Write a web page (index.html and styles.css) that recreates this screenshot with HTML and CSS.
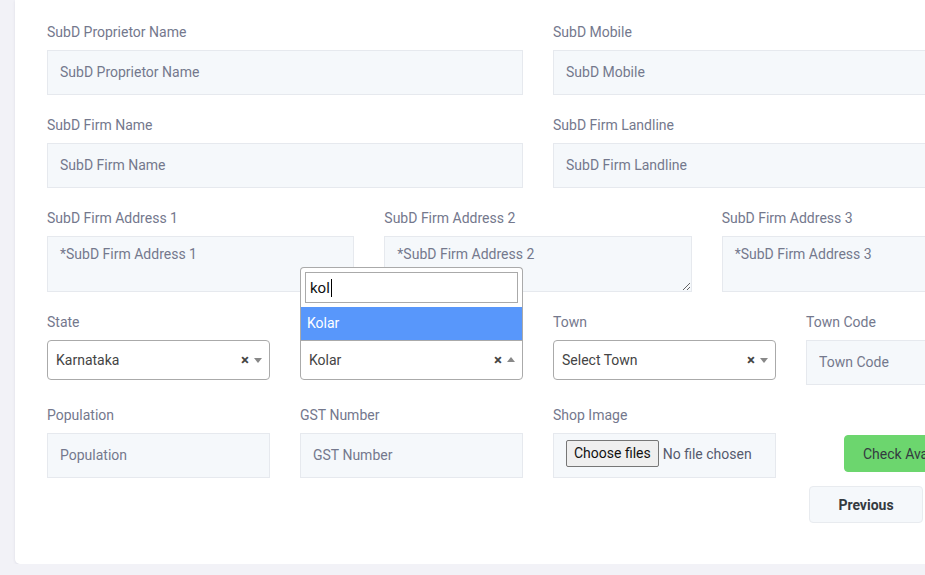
FILE: index.html
```html
<!DOCTYPE html>
<html lang="en">
<head>
<meta charset="utf-8">
<title>SubD Form</title>
<link rel="stylesheet" href="styles.css">
</head>
<body>
<div class="page">
  <form class="card">
    <div class="row row-2">
      <div class="field">
        <label class="lbl">SubD Proprietor Name</label>
        <input class="ctl" type="text" placeholder="SubD Proprietor Name">
      </div>
      <div class="field">
        <label class="lbl">SubD Mobile</label>
        <input class="ctl" type="text" placeholder="SubD Mobile">
      </div>
    </div>
    <div class="row row-2">
      <div class="field">
        <label class="lbl">SubD Firm Name</label>
        <input class="ctl" type="text" placeholder="SubD Firm Name">
      </div>
      <div class="field">
        <label class="lbl">SubD Firm Landline</label>
        <input class="ctl" type="text" placeholder="SubD Firm Landline">
      </div>
    </div>
    <div class="row row-3">
      <div class="field">
        <label class="lbl">SubD Firm Address 1</label>
        <textarea class="ctl area" placeholder="*SubD Firm Address 1"></textarea>
      </div>
      <div class="field">
        <label class="lbl">SubD Firm Address 2</label>
        <textarea class="ctl area" placeholder="*SubD Firm Address 2"></textarea>
      </div>
      <div class="field">
        <label class="lbl">SubD Firm Address 3</label>
        <textarea class="ctl area" placeholder="*SubD Firm Address 3"></textarea>
      </div>
    </div>
    <div class="row row-4">
      <div class="field">
        <label class="lbl">State</label>
        <div class="sel">
          <span class="sel-text">Karnataka</span>
          <span class="sel-clear">×</span>
          <span class="sel-arrow"></span>
        </div>
      </div>
      <div class="field">
        <label class="lbl">District</label>
        <div class="sel-wrap">
          <div class="sel sel-open">
            <span class="sel-text">Kolar</span>
            <span class="sel-clear">×</span>
            <span class="sel-arrow up"></span>
          </div>
          <div class="dropdown">
            <div class="dd-search"><span class="dd-typed">kol</span><span class="caret"></span></div>
            <div class="dd-option">Kolar</div>
          </div>
        </div>
      </div>
      <div class="field">
        <label class="lbl">Town</label>
        <div class="sel">
          <span class="sel-text">Select Town</span>
          <span class="sel-clear">×</span>
          <span class="sel-arrow"></span>
        </div>
      </div>
      <div class="field">
        <label class="lbl">Town Code</label>
        <input class="ctl" type="text" placeholder="Town Code">
      </div>
    </div>
    <div class="row row-4 last">
      <div class="field">
        <label class="lbl">Population</label>
        <input class="ctl" type="text" placeholder="Population">
      </div>
      <div class="field">
        <label class="lbl">GST Number</label>
        <input class="ctl" type="text" placeholder="GST Number">
      </div>
      <div class="field">
        <label class="lbl">Shop Image</label>
        <div class="ctl file">
          <span class="file-btn">Choose files</span>
          <span class="file-none">No file chosen</span>
        </div>
      </div>
      <div class="field check-col">
        <button type="button" class="btn btn-green">Check Availability</button>
      </div>
    </div>
    <div class="actions">
      <button type="button" class="btn btn-light">Previous</button>
      <button type="button" class="btn btn-primary">Next</button>
    </div>
  </form>
</div>
</body>
</html>
```
FILE: styles.css
```css
* { box-sizing: border-box; }
html, body {
  margin: 0;
  padding: 0;
  overflow: hidden;
  background: #f2f2f7;
  font-family: Roboto, "Liberation Sans", Arial, sans-serif;
  font-size: 14px;
}
.page {
  padding-left: 15px;
  width: 1100px;
}
.card {
  width: 1046px;
  background: #fff;
  border-radius: 0 0 5px 5px;
  box-shadow: 0 1px 3px rgba(40, 40, 80, 0.10);
  padding: 21px 32px 41px 32px;
}
.row {
  display: grid;
  column-gap: 30px;
  margin-bottom: 19px;
}
.row-2 { grid-template-columns: repeat(2, 1fr); }
.row-3 { grid-template-columns: repeat(3, 1fr); }
.row-4 { grid-template-columns: repeat(4, 1fr); align-items: start; }
.row.last { margin-bottom: 8px; }
.field { display: flex; flex-direction: column; }
.lbl {
  display: block;
  line-height: 22px;
  margin-bottom: 7px;
  color: #74788d;
  font-size: 14px;
}
.ctl {
  height: 45px;
  width: 100%;
  background: #f5f8fb;
  border: 1px solid #e6e9ee;
  border-radius: 0;
  padding: 0 12px 2px 12px;
  font-family: inherit;
  font-size: 14px;
  color: #495057;
  outline: none;
}
.ctl::placeholder { color: #74788d; opacity: 1; }
.area {
  height: 56px;
  padding: 7px 12px;
  line-height: 21px;
  resize: vertical;
}
.sel {
  height: 40px;
  border: 1px solid #aaa;
  border-radius: 4px;
  background: #fff;
  display: flex;
  align-items: center;
  padding: 0 7px 0 8px;
  color: #444;
}
.sel-text { flex: 1; font-size: 14px; }
.sel-clear {
  font-weight: bold;
  font-size: 15px;
  color: #444;
  margin-right: 5px;
  line-height: 1;
}
.sel-arrow {
  width: 0;
  height: 0;
  border-left: 4px solid transparent;
  border-right: 4px solid transparent;
  border-top: 5px solid #888;
  margin-top: 1px;
}
.sel-arrow.up {
  border-top: 0;
  border-bottom: 5px solid #888;
  margin-top: -2px;
}
.sel-wrap { position: relative; }
.sel-open { border-radius: 0 0 4px 4px; }
.dropdown {
  position: absolute;
  left: 0;
  right: 0;
  bottom: calc(100% - 1px);
  background: #fff;
  border: 1px solid #aaa;
  border-bottom: 0;
  border-radius: 4px 4px 0 0;
  padding-top: 4px;
}
.dd-search {
  margin: 0 4px 4px 4px;
  height: 31px;
  border: 1px solid #aaa;
  display: flex;
  align-items: center;
  padding: 0 4px;
  color: #111;
  font-size: 15px;
}
.caret {
  display: inline-block;
  width: 1px;
  height: 18px;
  background: #000;
  margin-left: 1px;
}
.dd-option {
  height: 34px;
  line-height: 33px;
  padding: 0 6px;
  background: #5897fb;
  color: #fff;
  font-size: 14px;
  border-bottom: 1px solid #aaa;
}
.file {
  display: flex;
  align-items: center;
  padding: 0 12px 4px 12px;
}
.file-btn {
  height: 27px;
  line-height: 25px;
  padding: 0 7px;
  background: #efefef;
  border: 1px solid #767676;
  border-radius: 2px;
  color: #111;
  font-size: 14px;
  margin-right: 4px;
}
.file-none { color: #555b6e; font-size: 14px; }
.check-col {
  padding-top: 31px;
  align-items: flex-start;
  padding-left: 38px;
}
.btn {
  font-family: inherit;
  font-size: 14px;
  height: 37px;
  border-radius: 4px;
  cursor: pointer;
}
.btn-green {
  background: #6cd66e;
  border: 1px solid #6cd66e;
  color: #343a40;
  padding: 0 18px;
}
.actions {
  display: flex;
  justify-content: flex-end;
  gap: 10px;
}
.btn-light {
  width: 114px;
  background: #f5f8fb;
  border: 1px solid #e8ebef;
  color: #343a40;
  font-weight: bold;
}
.btn-primary {
  width: 96px;
  background: #556ee6;
  border: 1px solid #556ee6;
  color: #fff;
  font-weight: bold;
}
```
